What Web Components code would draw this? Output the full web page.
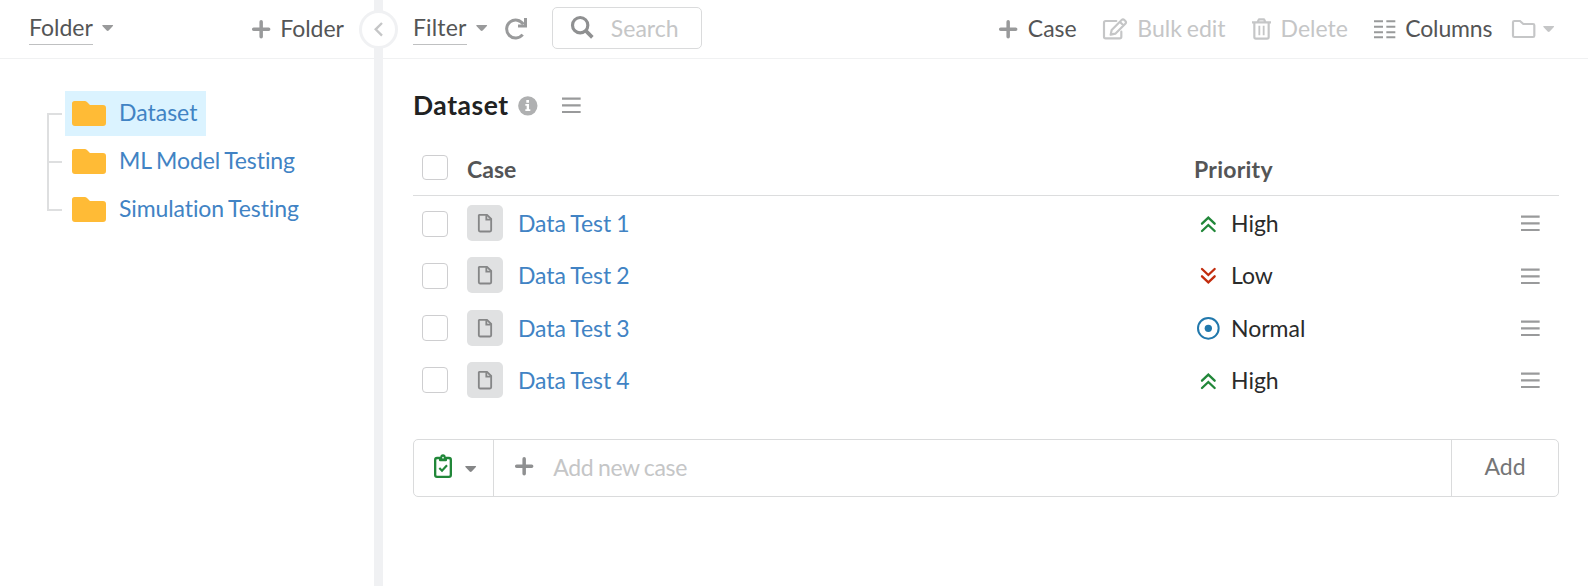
<!DOCTYPE html>
<html lang="en">
<head>
<meta charset="utf-8">
<title>Dataset</title>
<style>
html,body{margin:0;height:100%;background:#fff}
body{font-family:Lato,"Liberation Sans",sans-serif;font-size:23px;line-height:28px;color:#545556;overflow:hidden;font-variant-ligatures:none;word-spacing:-1px}
</style>
</head>
<body>
<case-app></case-app>
<script>
const ICONS = {
  plus: [55, 55, '<path d="M27.5 5V50M5 27.5H50" stroke="currentColor" stroke-width="10.500" stroke-linecap="round" fill="none"/>'],
  caret: [34, 18, '<path d="M2 0H32Q35 1 32 4L20 16.5Q17 19 14 16.5L2 4Q-1 1 2 0Z" fill="currentColor"/>'],
  left: [28, 44, '<path d="M24 3L5 22L24 41" fill="none" stroke="currentColor" stroke-width="7"/>'],
  refresh: [63, 62, '<path d="M50 50A27 27 0 1 1 52 19" fill="none" stroke="currentColor" stroke-width="9"/><path d="M58.5 0V24H36" fill="none" stroke="currentColor" stroke-width="9"/>'],
  search: [69, 69, '<circle cx="27.500" cy="27.500" r="23" fill="none" stroke="currentColor" stroke-width="9.500"/><path d="M44 44L64 64" stroke="currentColor" stroke-width="11"/>'],
  edit: [74, 66, '<path d="M40 9H8Q3 9 3 14V56Q3 61 8 61H50Q55 61 55 56V41" fill="none" stroke="currentColor" stroke-width="6.500" stroke-linecap="round"/><path d="M26 36L56 6Q60 2 64 6L67 9Q71 13 67 17L37 47L23 50ZM51 12L61 22" fill="none" stroke="currentColor" stroke-width="6.500" stroke-linejoin="round"/>'],
  trash: [57, 66, '<path d="M0 13H57M7 15V57Q7 62 12 62H45Q50 62 50 57V15M17 12L21 4H36L40 12" fill="none" stroke="currentColor" stroke-width="6.500" stroke-linejoin="round"/><path d="M22 23V52M35 23V52" stroke="currentColor" stroke-width="5.500"/>'],
  columns: [64, 56, '<path d="M0 4H27M37 4H64M0 20H27M37 20H64M0 36.500H27M37 36.500H64M0 52H27M37 52H64" stroke="currentColor" stroke-width="6"/>'],
  folderLine: [70, 54, '<path d="M3 7Q3 3 7 3H24L34 12H63Q67 12 67 16V47Q67 51 63 51H7Q3 51 3 47Z" fill="none" stroke="currentColor" stroke-width="6.500"/>'],
  folder: [102, 75, '<path d="M8 0H38Q42 0 45 3L54 12H93Q102 12 102 21V66Q102 75 93 75H9Q0 75 0 66V8Q0 0 8 0Z" fill="currentColor"/>'],
  menu: [56, 50, '<path d="M0 5H56M0 25H56M0 45H56" stroke="currentColor" stroke-width="6.500"/>'],
  info: [59, 59, '<circle cx="29.500" cy="29.500" r="29" fill="currentColor"/><path d="M25 12H33V20H25ZM22 24H33V40H37V45H22V40H26V29H22Z" fill="#fff"/>'],
  file: [42, 55, '<path d="M4 2.500H27L39.500 15V49Q39.500 52.500 36 52.500H6Q2.500 52.500 2.500 49V4Z" fill="none" stroke="currentColor" stroke-width="5.500"/><path d="M25 4V17H38" fill="none" stroke="currentColor" stroke-width="5.500"/>'],
  high: [44, 48, '<path d="M3 23L22 5L41 23M3 45L22 27L41 45" fill="none" stroke="#218739" stroke-width="7" stroke-linecap="round"/>'],
  low: [44, 48, '<path d="M3 3L22 21L41 3M3 25L22 43L41 25" fill="none" stroke="#c22d0e" stroke-width="7" stroke-linecap="round"/>'],
  normal: [68, 68, '<circle cx="34" cy="34" r="31" fill="none" stroke="#2178ac" stroke-width="6"/><circle cx="34" cy="34" r="11" fill="#2178ac"/>'],
  clipboard: [54, 69, '<path d="M3.500 15V60Q3.500 65.500 9 65.500H45Q50.500 65.500 50.500 60V15Q50.500 9 45 9H9Q3.500 9 3.500 15Z" fill="none" stroke="currentColor" stroke-width="7"/><path d="M15 6H19A8 8 0 0 1 35 6H39V16Q39 19 36 19H18Q15 19 15 16Z" fill="currentColor"/><circle cx="27" cy="8" r="2.500" fill="#fff"/><path d="M16 39L24 47L39 31" fill="none" stroke="currentColor" stroke-width="6.500"/>']
};
function define(name, css, html) {
  customElements.define(name, class extends HTMLElement {
    connectedCallback() {
      if (this.shadowRoot) return;
      this.attachShadow({mode: 'open'}).innerHTML =
        `<style>*{box-sizing:border-box}${css}</style>` + (typeof html === 'function' ? html(this) : html);
    }
  });
}
define('app-icon', ':host{display:block;flex:none;color:#999a9b}svg{display:block;overflow:visible}', el => {
  const [w, h, body] = ICONS[el.getAttribute('name')];
  return `<svg width="${w / 3}" height="${h / 3}" viewBox="0 0 ${w} ${h}">${body}</svg>`;
});
define('drop-label', `:host{display:flex;align-items:flex-start;flex:none;height:31px}
  span{height:31px;line-height:26px;border-bottom:1px solid #bfc0c1;white-space:nowrap}
  app-icon{margin:11px 0 0 9px}`,
  '<span><slot></slot></span><app-icon name="caret"></app-icon>');
define('tool-action', `:host{display:flex;align-items:center;flex:none;white-space:nowrap}
  :host([muted]){color:#c5c6c7} :host([muted]) app-icon{color:#c5c6c7} span{margin:-2px 0 0 10px}`,
  el => `<app-icon name="${el.getAttribute('icon')}"></app-icon><span><slot></slot></span>`);
define('check-box', ':host{display:block;flex:none;width:26px;height:26px;border:1px solid #ceced0;border-radius:4px;background:#fff}', '');
define('search-field', `:host{display:flex;align-items:center;flex:none;width:150px;height:42px;border:1px solid #dadbdc;border-radius:5px;padding-left:18px;color:#c5c6c7}
  app-icon{color:#8f9091;margin-bottom:2px} span{margin:-1px 0 0 17px}`,
  '<app-icon name="search"></app-icon><span><slot></slot></span>');
define('tree-item', `:host{display:flex;align-items:center;width:max-content;height:45px;padding:0 9px 0 7px;color:#4183c4;white-space:nowrap;letter-spacing:-.1px}
  :host([selected]){background:#dbf3ff;letter-spacing:0}
  app-icon{color:#ffbb36} span{margin:-4px 0 0 13px}`,
  '<app-icon name="folder"></app-icon><span><slot></slot></span>');
define('folder-tree', `:host{display:flex;padding:32px 0 0 47px}
  .branch{width:15px;height:98px;margin:22px 3px 0 0;border:2px solid #dedfe0;border-right:0;display:flex;align-items:center}
  .branch i{width:100%;height:2px;background:#dedfe0}
  .items{display:flex;flex-direction:column;gap:3px}`,
  '<div class="branch"><i></i></div><div class="items"><slot></slot></div>');
define('side-panel', `:host{display:block;width:374px;flex:none}
  header{display:flex;height:59px;border-bottom:1px solid #f0f1f2;padding:14px 30px 0 29px;justify-content:space-between;align-items:flex-start}
  header tool-action{height:30px}`,
  `<header><drop-label>Folder</drop-label><tool-action icon="plus">Folder</tool-action></header>
  <folder-tree><tree-item selected>Dataset</tree-item><tree-item>ML Model Testing</tree-item><tree-item>Simulation Testing</tree-item></folder-tree>`);
define('panel-divider', `:host{display:block;flex:none;width:9px;background:#f0f1f3;position:relative}
  button{position:absolute;left:-15px;top:10px;width:39px;height:39px;border-radius:50%;border:3px solid #f0f1f3;background:#fff;padding:0 0 0 1px;display:flex;align-items:center;justify-content:center}
  app-icon{color:#c5c6c7}`, '<button aria-label="Collapse"><app-icon name="left"></app-icon></button>');
define('main-toolbar', `:host{display:flex;height:59px;border-bottom:1px solid #f0f1f2;padding:0 33.5px 0 30px;align-items:flex-start}
  drop-label{margin-top:14px;letter-spacing:.15px} .refresh{margin:18px 0 0 19px} search-field{margin:7px 0 0 25px}
  .actions{display:flex;margin:14px 0 0 auto;height:30px;align-items:center}
  .actions tool-action+tool-action{margin-left:26px}
  .actions tool-action:nth-child(4){letter-spacing:-.15px}
  .more{display:flex;align-items:center;margin-left:19.5px}.more app-icon{color:#c5c6c7}.more app-icon+app-icon{margin-left:8px}`,
  `<drop-label>Filter</drop-label><app-icon class="refresh" name="refresh"></app-icon><search-field>Search</search-field>
  <div class="actions"><tool-action icon="plus">Case</tool-action><tool-action muted icon="edit">Bulk edit</tool-action><tool-action muted icon="trash">Delete</tool-action><tool-action icon="columns">Columns</tool-action>
  <div class="more"><app-icon name="folderLine"></app-icon><app-icon name="caret"></app-icon></div></div>`);
define('case-row', `:host{display:grid;grid-template-columns:54px 51px 1fr 327px;align-items:center;height:52.3px;word-spacing:-.5px}
  check-box{margin:.8px 0 0 9px}
  .tile{width:36px;height:36px;border-radius:5px;background:#e0e1e2;display:flex;align-items:center;justify-content:center}.tile app-icon{color:#858687}
  .name{color:#4183c4;letter-spacing:-.1px}
  .pri{display:flex;align-items:center;color:#2a2b2b}.sym{width:24px;display:flex;justify-content:center;margin:1px 11px 0 -35.5px}
  .pri>span{margin-left:-.5px}
  .pri>app-icon{margin:1px 19.500px 0 auto}`,
  el => `<check-box></check-box><div class="tile"><app-icon name="file"></app-icon></div><span class="name"><slot></slot></span>
  <div class="pri"><div class="sym"><app-icon name="${el.getAttribute('priority').toLowerCase()}"></app-icon></div><span>${el.getAttribute('priority')}</span><app-icon name="menu"></app-icon></div>`);
define('case-table', `:host{display:block}
  .head{display:flex;align-items:flex-start;height:50px;border-bottom:1px solid #dcddde;font-weight:700}
  .head check-box{height:25px;margin:9px 19px 0 9px}.head span{margin-top:9px}.head .p{margin-left:auto;width:365px;letter-spacing:.25px}
  .rows{padding-top:1px}`,
  '<div class="head"><check-box></check-box><span>Case</span><span class="p">Priority</span></div><div class="rows"><slot></slot></div>');
define('add-bar', `:host{display:flex;height:58px;border:1px solid #dadbdc;border-radius:5px;color:#c5c6c7}
  .type{width:80px;border-right:1px solid #dadbdc;display:flex;align-items:center;padding-left:20px}
  .type app-icon:first-child{color:#218739;margin-bottom:2px}.type app-icon+app-icon{color:#858687;margin:3px 0 0 13px}
  .entry{flex:1;display:flex;align-items:center;padding-left:21px}.entry app-icon{color:#8f9091;margin-bottom:3px}.entry span{margin:-2px 0 0 20px;letter-spacing:-.35px}
  .add{width:107px;border-left:1px solid #dadbdc;display:flex;align-items:center;justify-content:center;color:#757677;padding-bottom:4px}`,
  `<div class="type"><app-icon name="clipboard"></app-icon><app-icon name="caret"></app-icon></div>
  <div class="entry"><app-icon name="plus"></app-icon><span>Add new case</span></div><div class="add">Add</div>`);
define('case-app', `:host{display:flex;height:586px;width:1588px}
  main{flex:1;min-width:0}.content{padding:0 29px 0 30px}
  .title{display:flex;align-items:center;height:87px;padding-top:6px;color:#212222;font-size:26.5px;font-weight:700}
  .title span{letter-spacing:.55px;margin-top:-2px}
  .title app-icon{color:#afb0b1;margin-left:9px}.title app-icon+app-icon{margin-left:24.500px;color:#999a9b}
  add-bar{margin-top:32.8px}`,
  `<side-panel></side-panel><panel-divider></panel-divider><main><main-toolbar></main-toolbar><div class="content">
  <div class="title"><span>Dataset</span><app-icon name="info"></app-icon><app-icon name="menu"></app-icon></div>
  <case-table><case-row priority="High">Data Test 1</case-row><case-row priority="Low">Data Test 2</case-row><case-row priority="Normal">Data Test 3</case-row><case-row priority="High">Data Test 4</case-row></case-table>
  <add-bar></add-bar></div></main>`);
</script>
</body>
</html>
